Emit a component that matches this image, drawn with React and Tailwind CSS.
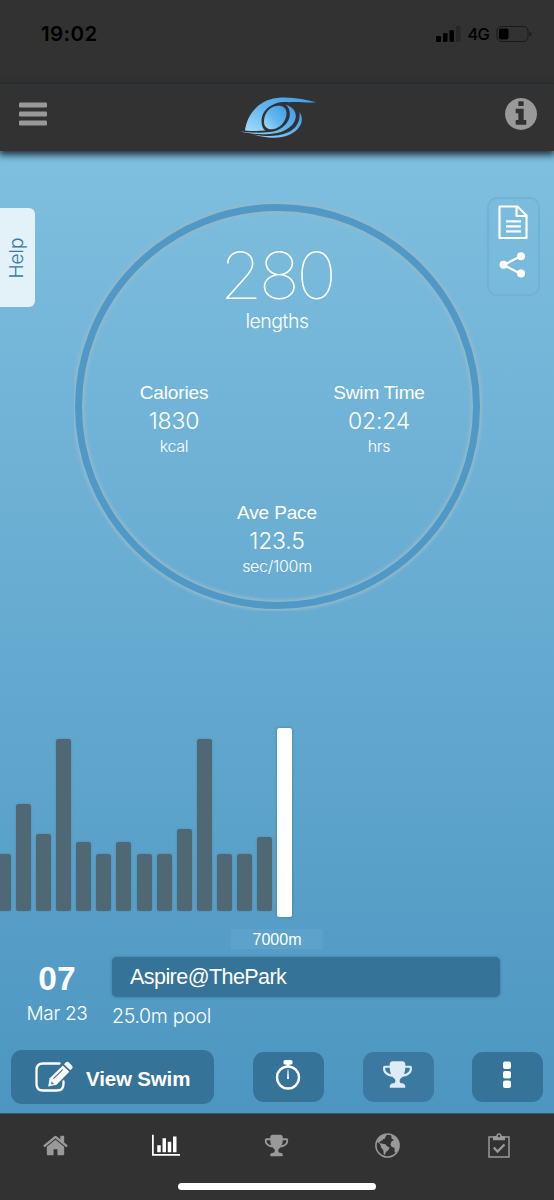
import React from "react";

const BARS = [57, 107, 77, 172, 69, 57, 69, 57, 57, 82, 172, 57, 57, 74];

const TROPHY =
  "M522 883q-74-162-74-371h-256v96q0 78 94.5 162t235.5 113zm1078-275v-96h-256q0 209-74 371 141-29 235.5-113t94.5-162zm128-128v128q0 71-41.5 143t-112 130-173 97.5-215.5 44.5q-42 54-95 95-38 34-52.5 72.5t-14.5 89.5q0 54 30.5 91t97.5 37q75 0 133.5 45.5t58.5 114.5v64q0 14-9 23t-23 9h-832q-14 0-23-9t-9-23v-64q0-69 58.5-114.5t133.5-45.5q67 0 97.5-37t30.5-91q0-51-14.5-89.5t-52.5-72.5q-53-41-95-95-113-5-215.5-44.5t-173-97.5-112-130-41.5-143v-128q0-40 28-68t68-28h288v-96q0-66 47-113t113-47h576q66 0 113 47t47 113v96h288q40 0 68 28t28 68z";
const HOME =
  "M1472 992v480q0 26-19 45t-45 19h-384v-384h-256v384h-384q-26 0-45-19t-19-45v-480q0-1 .5-3t.5-3l575-474 575 474q1 2 1 6zm223-69l-62 74q-8 9-21 11h-3q-13 0-21-7l-692-577-692 577q-12 8-24 7-13-2-21-11l-62-74q-8-10-7-23.5t11-21.5l719-599q32-26 76-26t76 26l244 204v-195q0-14 9-23t23-9h192q14 0 23 9t9 23v408l219 182q10 8 11 21.5t-7 23.5z";
const CHART =
  "M640 896v512h-256v-512h256zm384-512v1024h-256v-1024h256zm1024 1152v128h-2048v-1536h128v1408h1920zm-640-896v768h-256v-768h256zm384-384v1152h-256v-1152h256z";
const INFO =
  "M1152 1376v-160q0-14-9-23t-23-9h-96v-512q0-14-9-23t-23-9h-320q-14 0-23 9t-9 23v160q0 14 9 23t23 9h96v320h-96q-14 0-23 9t-9 23v160q0 14 9 23t23 9h448q14 0 23-9t9-23zm-128-896v-160q0-14-9-23t-23-9h-192q-14 0-23 9t-9 23v160q0 14 9 23t23 9h192q14 0 23-9t9-23zm640 416q0 209-103 385.5t-279.5 279.5-385.5 103-385.5-103-279.5-279.5-103-385.5 103-385.5 279.5-279.5 385.5-103 385.5 103 279.5 279.5 103 385.5z";

function Glyph({ d, className, viewBox = "0 0 1792 1792" }) {
  return (
    <svg viewBox={viewBox} className={className} fill="currentColor">
      <path d={d} />
    </svg>
  );
}

function Logo() {
  return (
    <svg viewBox="0 0 78 42" className="h-[42px] w-[78px]">
      <defs>
        <linearGradient id="brow" x1="0" y1="1" x2="1" y2="0">
          <stop offset="0" stopColor="#a5dcfb" />
          <stop offset="0.45" stopColor="#62b8f0" />
          <stop offset="1" stopColor="#3f9be6" />
        </linearGradient>
      </defs>
      <g fill="url(#brow)">
        <path d="M6 33.500C8 18 19 3 38 .9C52-.7 65 2 77 5.200C68 6.200 60 4.300 50 5.200C46 5 41 5 36 6.700C27 10 22.500 17 22.500 24C22.500 29 24 32 26.500 33.600Q16 34.600 6 33.500Z" />
        <path d="M35 9.500C42 7.500 47.500 10 47.500 16.500C47.500 24 41 31.500 33.500 32.300C28 32.800 24.800 29.500 25 24C25.300 17.500 29 11.500 35 9.500Z" />
        <path d="M46.500 7.500C54 10 58 15 56.500 21.500C54 31 43 37 27 37.200C16 37.500 8 36 1 34.600C11 35.600 22 36.200 31 35C41 34 48 28 50.300 21C51.800 15 50 10.500 46.500 7.500Z" />
        <path d="M60.500 15C66 23 61.500 32.500 51 37.500C39 43 25 40.500 14 37.500C26 39.400 38 40 48 35.800C57 32 61.500 25 60.500 15Z" />
      </g>
    </svg>
  );
}

function StatusBar() {
  return (
    <div className="flex h-[83px] items-start justify-between bg-[#323232] pl-[41px] pr-[22px] pt-[22px] text-black">
      <span className="text-[20.500px] font-semibold leading-[24px] tracking-[0.400px]">19:02</span>
      <div className="flex h-[24px] items-center">
        <svg viewBox="0 0 25 16" className="h-[16px] w-[25px]">
          <rect x="0" y="10" width="5" height="6" rx="1.300" />
          <rect x="7" y="7" width="4.500" height="9" rx="1.300" />
          <rect x="13.500" y="4" width="4.500" height="12" rx="1.300" />
          <rect x="20" y="0" width="4.500" height="16" rx="1.300" fill="#272727" />
        </svg>
        <span className="ml-[6px] text-[16.500px] font-medium leading-[24px] tracking-[-0.800px]">4G</span>
        <svg viewBox="0 0 36 18" className="ml-[7px] h-[18px] w-[36px]">
          <rect x="1" y="1.500" width="31" height="15" rx="4.500" fill="none" stroke="#191919" strokeWidth="1" />
          <rect x="3" y="3.500" width="9.500" height="11" rx="2" />
          <path d="M33.500 7q2 0 2 2t-2 2z" fill="#191919" />
        </svg>
      </div>
    </div>
  );
}

function Stat({ label, value, unit, className }) {
  return (
    <div className={`flex flex-col items-center text-white ${className}`}>
      <span className="font-['Liberation_Sans'] text-[19px] leading-[26px] tracking-[-0.150px]">{label}</span>
      <span className="text-[23px] font-light leading-[30px] tracking-[-0.200px]">{value}</span>
      <span className="text-[16px] font-light leading-[21px] tracking-[-0.300px]">{unit}</span>
    </div>
  );
}

function Ring() {
  return (
    <div className="relative ml-[38px] mt-[49px] h-[410px] w-[409px]">
      <svg viewBox="0 0 409 410" className="absolute inset-0 h-full w-full">
        <defs>
          <filter id="soft" x="-5%" y="-5%" width="110%" height="110%">
            <feGaussianBlur stdDeviation="1.600" />
          </filter>
        </defs>
        <circle cx="203.500" cy="205.500" r="199" fill="none" stroke="#91b9cb" strokeWidth="11.500" filter="url(#soft)" />
        <circle cx="203.500" cy="205.500" r="199" fill="none" stroke="#5099c6" strokeWidth="7" />
      </svg>
      <div className="relative flex h-full flex-col items-center pr-[3px] pt-[50px] text-white">
        <span className="scale-x-[1.060] font-['Inter'] text-[65px] font-thin leading-[50px] tracking-[-3.500px]">280</span>
        <span className="mt-[8px] text-[19.500px] font-light leading-[24px] tracking-[-0.500px]">lengths</span>
        <div className="mt-[47px] flex w-full justify-between pl-[55px] pr-[46px]">
          <Stat label="Calories" value="1830" unit="kcal" className="w-[90px]" />
          <Stat label="Swim Time" value="02:24" unit="hrs" className="w-[110px]" />
        </div>
        <Stat label="Ave Pace" value="123.5" unit="sec/100m" className="mt-[43px]" />
      </div>
    </div>
  );
}

function Tools() {
  return (
    <div className="ml-[4px] mt-[45px] flex h-[99px] w-[53px] flex-col items-center rounded-[10px] border-2 border-[#6aacd0]/60 bg-[#7abbde]/50 pr-[2px] pt-[6px]">
      <svg viewBox="0 0 30 35" className="h-[35px] w-[30px] shrink-0" fill="none" stroke="white" strokeWidth="2.200" strokeLinejoin="round">
        <path d="M1.500 1.500h18l9 9v22.500h-27zM18.500 2v9h9.500" />
        <path d="M8 16.300h15M8 21.300h15M8 26.300h15" />
      </svg>
      <svg viewBox="0 0 27 26" className="mt-[12px] h-[26px] w-[27px]" fill="white">
        <path d="M22 4L4.500 13L22 22" fill="none" stroke="white" strokeWidth="2.200" />
        <circle cx="22" cy="4.200" r="4" />
        <circle cx="4.500" cy="12.800" r="4" />
        <circle cx="22" cy="21.500" r="4" />
      </svg>
    </div>
  );
}

function EditIcon() {
  return (
    <svg viewBox="0 0 38 32" className="h-[32px] w-[38px]">
      <path d="M24.500 2.500H8Q1.500 2.500 1.500 9V23Q1.500 29.500 8 29.500H22Q28.500 29.500 28.500 23V20.500" fill="none" stroke="white" strokeWidth="2.300" strokeLinecap="round" />
      <path d="M27.800 4.500L34.300 10.800L21.500 23.800L13.200 25.600L14.700 17.300Z" fill="white" />
      <path d="M29 3.200L31 1.300Q32.500 .2 34 1.600L37 4.700Q38.200 6.200 37 7.600L35.300 9.300Z" fill="white" />
      <path d="M18.500 17.700L27.700 8.700" fill="none" stroke="#367399" strokeWidth="1.100" />
      <path d="M16.300 20.200l2.700 2.700l-2.800 .600z" fill="#367399" />
    </svg>
  );
}

function Stopwatch() {
  return (
    <svg viewBox="0 0 26 30" className="h-[30px] w-[26px]">
      <rect x="8.500" y="0" width="9" height="4.500" rx="1.500" fill="white" />
      <path d="M13 3v4" stroke="white" strokeWidth="3" />
      <circle cx="13" cy="17.500" r="11" fill="none" stroke="white" strokeWidth="2.400" />
      <path d="M12.600 9.500h.8l.6 9.500h-2z" fill="white" />
    </svg>
  );
}

function Earth() {
  return (
    <svg viewBox="0 0 24 24" className="mt-[-2px] h-[25px] w-[25px]" fill="currentColor">
      <circle cx="12" cy="12" r="11.100" fill="none" stroke="currentColor" strokeWidth="1.500" />
      <path d="M2.500 8L5 3.500L9 1.200L11.500 1.500L10 3.800L9.500 5.500L7.500 6L7 7.500L5.500 7.500L4.500 9.200L2.500 9.500Z" />
      <path d="M4 9.600L7.300 10.200L10 10.800L11.500 12.600L14 13.800L12.800 16.500L10.500 18.300L9.500 21L8.400 20.500L8 16.500L5.800 14L5.500 12Z" />
      <path d="M15.500 1.500L20.500 4L23.200 9V14L20.500 18.800L18.800 18.500L18.800 14.500L15.800 13.300L14.800 10.800L16 7.800L18.300 6.800L16 5.500Z" />
    </svg>
  );
}

function Clipboard() {
  return (
    <svg viewBox="0 0 22 25" className="mt-[-2px] h-[25px] w-[22px]">
      <path d="M1 4h20v20H1z" fill="none" stroke="currentColor" strokeWidth="1.500" />
      <path d="M5 3.200h3.200q.3-3 2.800-3t2.800 3h3.200v4H5z" fill="currentColor" />
      <circle cx="11" cy="3" r="1.200" fill="#323232" />
      <path d="M5.800 14.500L9.500 18.500L16.500 11.500" fill="none" stroke="currentColor" strokeWidth="2.300" />
    </svg>
  );
}

export default function App() {
  return (
    <div className="flex h-[1200px] w-[554px] flex-col overflow-hidden bg-[#323232] font-['Inter',sans-serif]">
      <StatusBar />
      <header className="relative z-10 flex h-[68px] items-center justify-between border-t border-[#292929] bg-[#323232] pl-[19px] pr-[17px] shadow-[0_3px_7px_1px_rgba(20,35,45,0.9)]">
        <svg viewBox="0 0 28 24" className="mt-[-7px] h-[24px] w-[28px]" fill="#999999">
          <rect y="0.500" width="28" height="5" rx="1.200" />
          <rect y="9.500" width="28" height="5" rx="1.200" />
          <rect y="18.500" width="28" height="5" rx="1.200" />
        </svg>
        <div className="mr-[-3px]"><Logo /></div>
        <Glyph d={INFO} viewBox="128 128 1536 1536" className="mt-[-7px] h-[32px] w-[32px] text-[#999999]" />
      </header>

      <main className="flex h-[962px] flex-col bg-linear-to-b from-[#7fbfdf] to-[#4c96c1] pt-px">
        <div className="flex items-start">
          <div className="mt-[56px] flex h-[99px] w-[35px] items-center justify-center rounded-r-[6px] bg-[#e3f1f8]">
            <span className="-rotate-90 text-[19px] font-light leading-[24px] text-[#367ba4]">Help</span>
          </div>
          <div className="ml-px"><Ring /></div>
          <Tools />
        </div>

        <div className="mt-[117px] flex h-[189px] items-start gap-[5px]">
          <div className="ml-[-4px] flex h-[183px] items-end gap-[5.080px]">
            {BARS.map((height, i) => (
              <div key={i} className="w-[15px] shrink-0 rounded-[2.500px] bg-[#506873] shadow-[0_0_2px_rgba(60,110,140,0.5)]" style={{ height }} />
            ))}
          </div>
          <div className="h-[189px] w-[15px] rounded-[2.500px] bg-white shadow-[0_0_3px_rgba(50,100,130,0.6)]" />
        </div>
        <div className="ml-[231px] mt-[12px] h-[20px] w-[92px] bg-[#5fa4cd]/70 text-center font-['Liberation_Sans'] text-[16px] leading-[21px] text-white">7000m</div>

        <div className="mt-[8px] flex h-[72px]">
          <div className="flex w-[112px] flex-col items-center pl-[2px] text-white">
            <span className="mt-[3px] font-['Liberation_Sans'] text-[33.500px] font-bold leading-[38px]">07</span>
            <span className="mt-[4px] text-[19px] font-light leading-[24px] tracking-[-0.300px]">Mar 23</span>
          </div>
          <div className="flex flex-col text-white">
            <div className="h-[40px] w-[388px] rounded-[5px] bg-[#367399] pl-[18px] font-['Liberation_Sans'] text-[21.500px] leading-[41px] tracking-[-0.550px] shadow-[0_0_3px_rgba(40,90,120,0.6)]">Aspire@ThePark</div>
            <span className="mt-[7px] text-[19.500px] font-light leading-[24px] tracking-[-0.300px]">25.0m pool</span>
          </div>
        </div>

        <div className="mt-[21px] flex items-center pl-[11px]">
          <button className="flex h-[54px] w-[203px] items-center rounded-[11px] bg-[#367399] pl-[24px] text-white">
            <EditIcon />
            <span className="ml-[13px] mt-[4px] font-['Liberation_Sans'] text-[20.500px] font-bold tracking-[-0.150px]">View Swim</span>
          </button>
          <button className="ml-[39px] flex h-[50px] w-[71px] justify-center rounded-[11px] bg-[#367399] pr-[1px] pt-[8px]"><Stopwatch /></button>
          <button className="ml-[38.500px] flex h-[50px] w-[71px] justify-center rounded-[11px] bg-[#3b79a0] pr-[1px] pt-[7px] text-[#dcebf5]">
            <Glyph d={TROPHY} className="h-[31px] w-[31px]" />
          </button>
          <button className="ml-[38.500px] flex h-[50px] w-[71px] justify-center rounded-[11px] bg-[#367399] pr-[1px] pt-[9px]">
            <svg viewBox="0 0 8 28" className="h-[28px] w-[8px]" fill="white">
              <rect y="0.500" width="8" height="7.500" rx="2" />
              <rect y="10" width="8" height="7.500" rx="2" />
              <rect y="19.500" width="8" height="7.500" rx="2" />
            </svg>
          </button>
        </div>
      </main>

      <footer className="flex h-[87px] flex-col items-center border-t border-[#3c5360] bg-[#323232] text-[#999999]">
        <nav className="grid h-[64px] w-full grid-cols-5 items-center justify-items-center">
          <Glyph d={HOME} className="mt-[-2px] h-[27px] w-[27px]" />
          <Glyph d={CHART} viewBox="0 0 2048 1792" className="mt-[-2px] h-[24.500px] w-[28px] text-white" />
          <Glyph d={TROPHY} className="mt-[-2px] h-[25px] w-[25px]" />
          <Earth />
          <Clipboard />
        </nav>
        <div className="mt-[5px] h-[7px] w-[198px] rounded-full bg-white" />
      </footer>
    </div>
  );
}
